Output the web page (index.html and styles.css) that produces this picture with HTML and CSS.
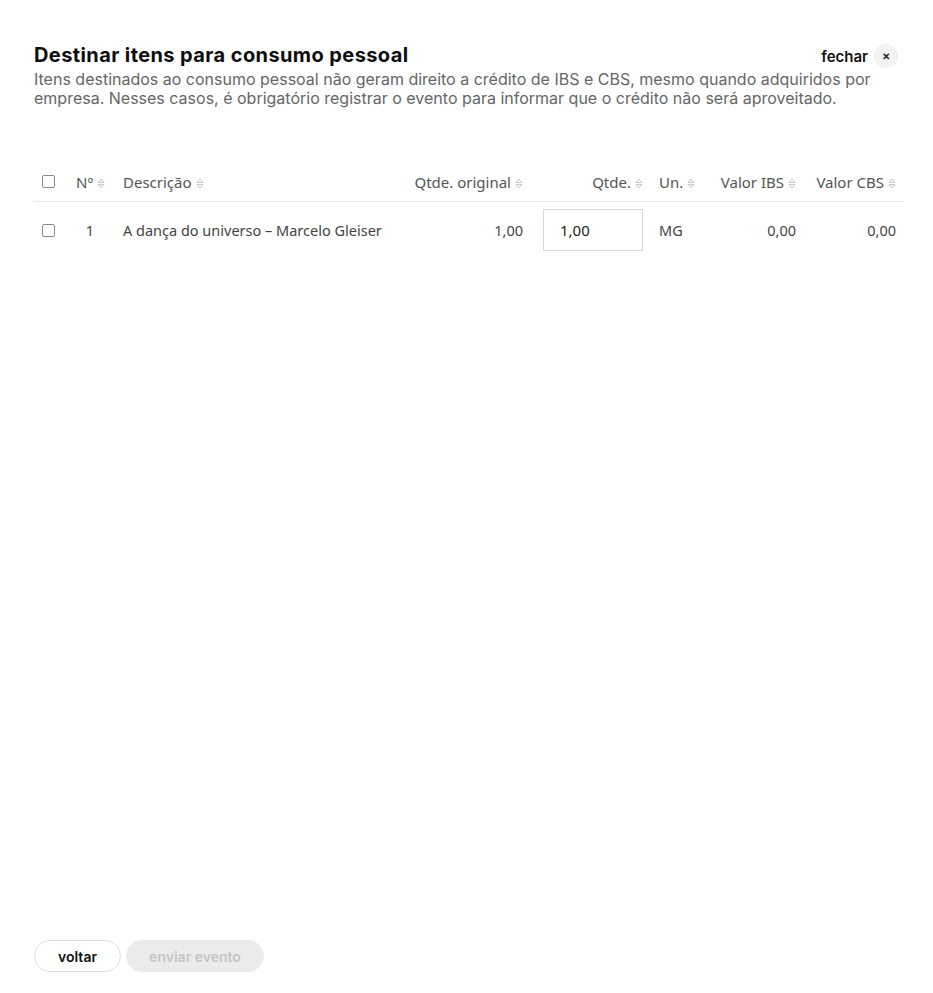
FILE: index.html
```html
<!DOCTYPE html>
<html lang="pt-BR">
<head>
<meta charset="utf-8">
<title>Destinar itens para consumo pessoal</title>
<link rel="stylesheet" href="styles.css">
</head>
<body>
<div class="page">
  <header class="head">
    <div class="title-row">
      <h1 class="title">Destinar itens para consumo pessoal</h1>
      <button class="close-btn" type="button">fechar <span class="close-x">✕</span></button>
    </div>
    <p class="subtitle">Itens destinados ao consumo pessoal não geram direito a crédito de IBS e CBS, mesmo quando adquiridos por empresa. Nesses casos, é obrigatório registrar o evento para informar que o crédito não será aproveitado.</p>
  </header>

  <table class="grid">
    <colgroup>
      <col class="c-check"><col class="c-num"><col class="c-desc"><col class="c-orig"><col class="c-qty"><col class="c-un"><col class="c-ibs"><col class="c-cbs">
    </colgroup>
    <thead>
      <tr>
        <th><span class="box"></span></th>
        <th class="left">Nº<svg class="sort" viewBox="0 0 8 11"><path d="M1 4.5 L4 1 L7 4.5 Z M1 6.5 L4 10 L7 6.5 Z"/></svg></th>
        <th class="left">Descrição<svg class="sort" viewBox="0 0 8 11"><path d="M1 4.5 L4 1 L7 4.5 Z M1 6.5 L4 10 L7 6.5 Z"/></svg></th>
        <th class="right">Qtde. original<svg class="sort" viewBox="0 0 8 11"><path d="M1 4.5 L4 1 L7 4.5 Z M1 6.5 L4 10 L7 6.5 Z"/></svg></th>
        <th class="right">Qtde.<svg class="sort" viewBox="0 0 8 11"><path d="M1 4.5 L4 1 L7 4.5 Z M1 6.5 L4 10 L7 6.5 Z"/></svg></th>
        <th class="left">Un.<svg class="sort" viewBox="0 0 8 11"><path d="M1 4.5 L4 1 L7 4.5 Z M1 6.5 L4 10 L7 6.5 Z"/></svg></th>
        <th class="right">Valor IBS<svg class="sort" viewBox="0 0 8 11"><path d="M1 4.5 L4 1 L7 4.5 Z M1 6.5 L4 10 L7 6.5 Z"/></svg></th>
        <th class="right">Valor CBS<svg class="sort" viewBox="0 0 8 11"><path d="M1 4.5 L4 1 L7 4.5 Z M1 6.5 L4 10 L7 6.5 Z"/></svg></th>
      </tr>
    </thead>
    <tbody>
      <tr>
        <td><span class="box"></span></td>
        <td class="num">1</td>
        <td class="left">A dança do universo – Marcelo Gleiser</td>
        <td class="right">1,00</td>
        <td class="qty-cell"><input class="qty" type="text" value="1,00"></td>
        <td class="left">MG</td>
        <td class="right">0,00</td>
        <td class="right">0,00</td>
      </tr>
    </tbody>
  </table>

  <div class="spacer"></div>

  <footer class="actions">
    <button class="btn btn-outline" type="button">voltar</button>
    <button class="btn btn-disabled" type="button" disabled>enviar evento</button>
  </footer>
</div>
</body>
</html>
```

FILE: styles.css
```css
* { box-sizing: border-box; }
html, body { margin: 0; padding: 0; background: #fff; }
body { font-family: "Inter", "Noto Sans", sans-serif; color: #111; }

.page {
  min-height: 993px;
  padding: 42px 29px 21px 34px;
  display: flex;
  flex-direction: column;
}

.title-row {
  display: flex;
  justify-content: space-between;
  align-items: center;
}
.title {
  margin: 0;
  font-size: 20px;
  font-weight: 700;
  line-height: 24px;
  color: #0d0d0d;
  letter-spacing: 0.4px;
}
.subtitle {
  margin: 2px 0 0;
  font-size: 16px;
  line-height: 19px;
  color: #666;
}
.close-btn {
  flex: none;
  display: flex;
  align-items: center;
  gap: 6px;
  border: 0;
  background: none;
  padding: 0;
  margin: 2px 6px 0 0;
  font-family: "Inter", sans-serif;
  font-size: 15px;
  font-weight: 600;
  color: #111;
}
.close-x {
  width: 24px;
  height: 24px;
  border-radius: 50%;
  background: #f2f2f2;
  display: flex;
  align-items: center;
  justify-content: center;
  font-size: 10px;
  font-weight: 700;
  color: #222;
}

.grid {
  margin-top: 55px;
  width: 870px;
  border-collapse: collapse;
  table-layout: fixed;
  font-family: "Noto Sans", "Open Sans", sans-serif;
  font-size: 14.5px;
  color: #444;
}
.c-check { width: 34px; }
.c-num { width: 47px; }
.c-desc { width: 289px; }
.c-orig { width: 127px; }
.c-qty { width: 120px; }
.c-un { width: 53px; }
.c-ibs { width: 100px; }
.c-cbs { width: 100px; }

.grid th {
  height: 38px;
  font-size: 15px;
  font-weight: 400;
  color: #555;
  padding: 0 8px;
  border-bottom: 1px solid #e9e9e9;
  white-space: nowrap;
}
.grid td {
  height: 58px;
  padding: 0 8px;
  white-space: nowrap;
}
.left { text-align: left; }
.right { text-align: right; }
.num { text-align: right; padding-right: 21px !important; }

.sort {
  width: 8px;
  height: 11px;
  margin-left: 4px;
  vertical-align: -1px;
  fill: none;
  stroke: #c9c9c9;
  stroke-width: 1;
}

.box {
  display: block;
  width: 13px;
  height: 13px;
  border: 1.5px solid #8a8a8a;
  border-radius: 2px;
}

.qty-cell { padding: 0 9px 0 12px !important; }
.qty {
  width: 100px;
  height: 42px;
  border: 1px solid #d9d9d9;
  padding: 0 16px;
  font-family: "Noto Sans", sans-serif;
  font-size: 15px;
  color: #222;
  outline: none;
}

.spacer { flex: 1; }

.actions {
  display: flex;
  gap: 5px;
}
.btn {
  height: 32px;
  border-radius: 16px;
  font-family: "Inter", sans-serif;
  font-size: 14px;
  font-weight: 600;
  padding: 0 20px;
}
.btn-outline {
  width: 87px;
  background: #fff;
  border: 1px solid #dedede;
  color: #111;
}
.btn-disabled {
  width: 138px;
  background: #ebebeb;
  border: 1px solid #ebebeb;
  color: #c6c6c6;
}
```
